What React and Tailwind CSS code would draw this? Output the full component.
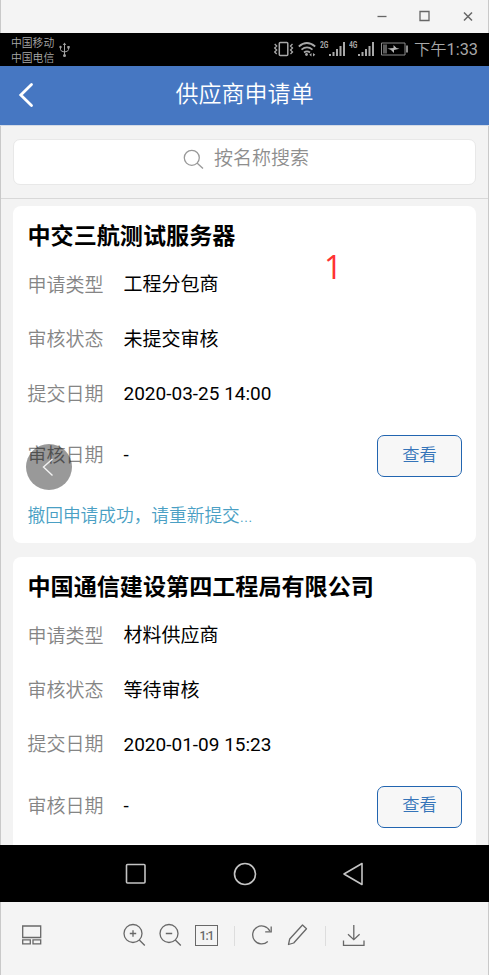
const APPLICATIONS = [
  {
    name: '中交三航测试服务器',
    rows: [
      ['申请类型', '工程分包商'],
      ['审核状态', '未提交审核'],
      ['提交日期', '2020-03-25 14:00'],
    ],
    audited: '-',
    message: '撤回申请成功，请重新提交...',
  },
  {
    name: '中国通信建设第四工程局有限公司',
    rows: [
      ['申请类型', '材料供应商'],
      ['审核状态', '等待审核'],
      ['提交日期', '2020-01-09 15:23'],
    ],
    audited: '-',
    message: '',
  },
];

/* ── Viewer window title bar ───────────────────────────────── */
function TitleBar() {
  return (
    <div className="flex h-[33px] shrink-0 items-center justify-end border-x border-[#c9c9c9] bg-[#f4f4f4] pr-[12px]">
      <svg width="100" height="16" viewBox="0 0 100 16" fill="none" stroke="#666" strokeWidth="1.3">
        <path d="M1.500 7.500h9" />
        <path d="M44 2.500h9v9h-9z" />
        <path d="M88 3.500l8 8M96 3.500l-8 8" strokeWidth="1.500" />
      </svg>
    </div>
  );
}

/* ── Phone status bar ──────────────────────────────────────── */
function Usb() {
  return (
    <svg width="12" height="16" viewBox="0 0 12 16" fill="none" stroke="#a2a2a2" strokeWidth="1">
      <path d="M5.5 2v11M1.5 5v2.5q0 2 4 2.5q4-.5 4-2.500V5" />
      <path d="M3.800 3L5.500 .5L7.200 3z" fill="#a2a2a2" stroke="none" />
      <circle cx="5.500" cy="13.500" r="1.500" fill="#a2a2a2" stroke="none" />
      <circle cx="1.500" cy="5" r="1.200" fill="#a2a2a2" stroke="none" />
      <path d="M8.300 4h2.400v2.400H8.300z" fill="#a2a2a2" stroke="none" />
    </svg>
  );
}

function Signal({ type }) {
  return (
    <div className="flex items-start">
      <span className="w-[9px] origin-left scale-x-75 text-[9px] leading-[8px] font-bold">{type}</span>
      <svg width="17" height="16" viewBox="0 0 17 16" fill="#a8a8a8">
        <path d="M0 13h2v2H0zM3.500 11h2v4h-2zM7 8h2v7H7zM10.500 5h2v10h-2zM14 1h2v14h-2z" />
      </svg>
    </div>
  );
}

function StatusBar() {
  return (
    <div className="flex h-[33px] shrink-0 items-center bg-black pl-[11px] text-[#a8a8a8]">
      <div className="pt-[2px] text-[10.800px] leading-[15px] font-[350]">
        <p>中国移动</p>
        <p>中国电信</p>
      </div>
      <div className="ml-[5px]"><Usb /></div>
      <div className="ml-auto flex items-center pr-[11px]">
        <svg width="20" height="16" viewBox="0 0 20 16" fill="none" stroke="#a8a8a8" strokeWidth="1.500">
          <rect x="5.300" y="1.500" width="8.500" height="13" rx="1" />
          <path d="M.7 3l2 2-2 2 2 2-2 2 2 2M18.500 3l-2 2 2 2-2 2 2 2-2 2" strokeWidth="1.300" />
        </svg>
        <svg className="ml-[4px]" width="18" height="16" viewBox="0 0 18 16" fill="none" stroke="#a8a8a8" strokeWidth="1.700">
          <path d="M.8 5.500q8-7 16.400 0M3.500 8.700q5.500-4.500 11 0M6 11.500q3-2.300 6 0" />
          <circle cx="8.500" cy="13.500" r="1.400" fill="#a8a8a8" stroke="none" />
          <path d="M13.500 12v3.500l-2.200-1.700zM15 12v3.500l2.300-1.700z" fill="#a8a8a8" stroke="none" />
        </svg>
        <div className="ml-[4px]"><Signal type="2G" /></div>
        <div className="ml-[3px]"><Signal type="4G" /></div>
        <svg className="ml-[6px]" width="28" height="14" viewBox="0 0 28 14" fill="none" stroke="#8b8b8b">
          <path d="M.5 1h23.500v12H.5z" />
          <path d="M2 2.500h4v9H2z" fill="#5a5a5a" stroke="none" />
          <path d="M26 3.500v7" strokeWidth="2" />
          <path d="M6.500 6.500L12.500 6v-3l3 3 3 .8-5.500 1.200v3L10 8z" fill="#b5b5b5" stroke="none" />
        </svg>
        <span className="ml-[5px] pt-[2px] text-[16.300px] leading-none font-[350]">
          下午<span className="font-normal">1:33</span>
        </span>
      </div>
    </div>
  );
}

/* ── App header and search ─────────────────────────────────── */
function Header() {
  return (
    <div className="grid h-[60px] shrink-0 grid-cols-[60px_1fr_60px] items-center border-b border-[#d4dbe6] bg-[#4677c2] pb-[2px] text-white">
      <svg className="ml-[18px]" width="16" height="26" viewBox="0 0 16 26" fill="none" stroke="currentColor" strokeWidth="2.800" strokeLinecap="round">
        <path d="M13.500 2.500L2.800 13l10.700 10.500" />
      </svg>
      <h1 className="text-center text-[23px] leading-none font-[350]">供应商申请单</h1>
    </div>
  );
}

function Search() {
  return (
    <div className="h-[73px] shrink-0 border-b border-[#d8d8d8] px-[12px] pt-[13px]">
      <div className="flex h-[46px] items-center justify-center rounded-[7px] border border-[#e8e8e8] bg-white pb-[7px] pl-[3px] text-[19px] text-[#8e8e8e]">
        <svg className="mt-[2px] mr-[10px]" width="21" height="21" viewBox="0 0 21 21" fill="none" stroke="#999" strokeWidth="1.300">
          <circle cx="8.800" cy="8.800" r="7.500" />
          <path d="M14 14l6 5.500" />
        </svg>
        <span className="leading-none font-[350]">按名称搜索</span>
      </div>
    </div>
  );
}

/* ── Application card ──────────────────────────────────────── */
function Field({ label, value }) {
  return (
    <>
      <span className="w-[96px] shrink-0 pt-px font-[350] text-[#858585]">{label}</span>
      <span className="text-black">{value}</span>
    </>
  );
}

function Card({ item }) {
  return (
    <div className="shrink-0 rounded-[8px] bg-white pt-[9px] pr-[14px] pl-[14.500px] text-[19px]">
      <h2 className="flex h-[43px] items-center pt-[2px] text-[23.100px] font-bold text-black">{item.name}</h2>
      {item.rows.map(([label, value]) => (
        <div key={label} className="flex h-[54.400px] items-center pt-px">
          <Field label={label} value={value} />
        </div>
      ))}
      <div className="flex h-[69px] items-center">
        <Field label="审核日期" value={item.audited} />
        <button className="mt-px ml-auto h-[42px] w-[85px] rounded-[7px] border border-[#2265b0] bg-[#f7f7f7] pb-px text-[17.300px] font-[350] text-[#3474b9]">
          查看
        </button>
      </div>
      <p className="flex h-[53px] items-center text-[17.700px] font-[350] text-[#4a9fc4]">{item.message}</p>
    </div>
  );
}

/* ── Phone navigation keys ─────────────────────────────────── */
function NavKeys() {
  return (
    <div className="flex h-[57px] shrink-0 items-center justify-center bg-black">
      <svg width="240" height="26" viewBox="0 0 240 26" fill="none" stroke="#c4c4c4" strokeWidth="1.600" strokeLinejoin="round">
        <rect x="1.500" y="3.500" width="18.500" height="18.500" rx="1" />
        <circle cx="120" cy="13" r="10.500" />
        <path d="M237 2.500v21L219 13z" />
      </svg>
    </div>
  );
}

/* ── Viewer toolbar ────────────────────────────────────────── */
function Toolbar() {
  return (
    <div className="flex h-[73px] shrink-0 items-start border-x border-[#c9c9c9] bg-[#f4f4f4] pt-[21px] pl-[20px] text-[#686868]">
      <svg width="22" height="24" viewBox="0 0 22 24" fill="none" stroke="currentColor" strokeWidth="1.300">
        <path d="M1.700 3h18v11.500h-18zM1.700 16.800h7.600v4H1.700zM12 16.800h7.700v4H12z" />
      </svg>
      <svg className="ml-[79px]" width="24" height="24" viewBox="0 0 24 24" fill="none" stroke="currentColor" strokeWidth="1.300">
        <circle cx="11" cy="10.500" r="9" />
        <path d="M17.300 17l5.500 5.500M7.800 10.500h6.400M11 7.300v6.400" />
      </svg>
      <svg className="ml-[12px]" width="24" height="24" viewBox="0 0 24 24" fill="none" stroke="currentColor" strokeWidth="1.300">
        <circle cx="11" cy="10.500" r="9" />
        <path d="M17.300 17l5.500 5.500M7.800 10.500h6.400" />
      </svg>
      <div className="mt-[2px] ml-[13px] flex h-[21px] w-[23px] items-center justify-center border border-[#686868] text-[12px] font-medium leading-none tracking-[-1px]">
        1:1
      </div>
      <div className="mt-[3px] ml-[16px] h-[20px] w-px bg-[#dddddd]" />
      <svg className="ml-[16px]" width="24" height="24" viewBox="0 0 24 24" fill="none" stroke="currentColor" strokeWidth="1.300">
        <path d="M16.800 18.500A9 9 0 1 1 18.800 8M20.200 3.500v5.300h-6" />
      </svg>
      <svg className="ml-[12px]" width="24" height="24" viewBox="0 0 24 24" fill="none" stroke="currentColor" strokeWidth="1.300" strokeLinejoin="round">
        <path d="M1.500 21.500l1.200-5.500L15.500 2l4 3.700L6.700 20z" />
      </svg>
      <div className="mt-[3px] ml-[14px] h-[20px] w-px bg-[#dddddd]" />
      <svg className="ml-[16px]" width="24" height="24" viewBox="0 0 24 24" fill="none" stroke="currentColor" strokeWidth="1.300">
        <path d="M11.800 2v14.500M6 11.300l5.800 5.400 5.800-5.400M1.500 17.500v4.800H22v-4.800" />
      </svg>
    </div>
  );
}

export default function App() {
  return (
    <div className="relative flex h-[975px] w-[489px] flex-col overflow-hidden bg-[#f3f3f3] font-[Roboto,'Noto_Sans_CJK_SC',sans-serif]">
      <TitleBar />
      <StatusBar />
      <Header />
      <div className="flex h-[719px] shrink-0 flex-col overflow-hidden border-x border-[#c9c9c9]">
        <Search />
        <div className="flex flex-col gap-[13.500px] px-[12px] pt-[7px]">
          {APPLICATIONS.map(item => (
            <Card key={item.name} item={item} />
          ))}
        </div>
      </div>
      <NavKeys />
      <Toolbar />

      {/* Floating previous-image button */}
      <button className="absolute top-[444px] left-[26px] flex h-[46px] w-[46px] items-center justify-center rounded-full bg-black/40">
        <svg className="-ml-[2px]" width="12" height="20" viewBox="0 0 12 20" fill="none" stroke="#f2f2f2" strokeWidth="1.400">
          <path d="M10.500 2L1.500 10l9 8.500" />
        </svg>
      </button>

      {/* Annotation mark */}
      <span className="absolute top-[250px] left-[324px] font-['Open_Sans',sans-serif] text-[32px] leading-[34px] font-medium text-[#ff3232]">1</span>
    </div>
  );
}
